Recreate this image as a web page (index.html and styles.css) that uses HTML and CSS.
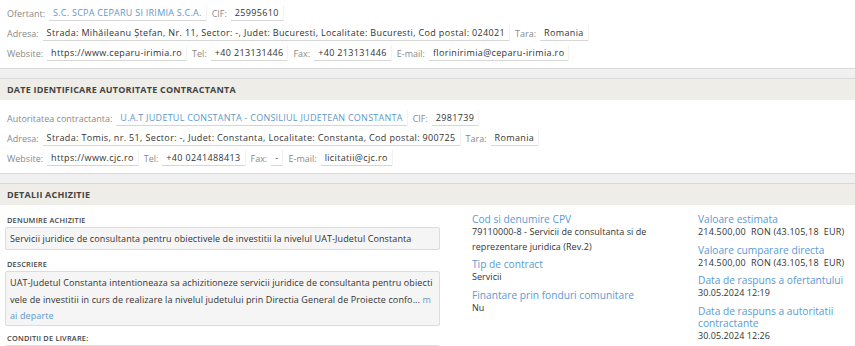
FILE: index.html
```html
<!DOCTYPE html>
<html lang="ro">
<head>
    <meta charset="UTF-8">
    <meta name="viewport" content="width=device-width, initial-scale=1.0">
    <title>Detalii achizitie</title>
    <link rel="stylesheet" href="styles.css">
</head>
<body>
    <!-- Ofertant -->
    <div class="panel first">
        <div class="panel-body">
            <div class="info-row">
                <span class="lbl">Ofertant:</span>
                <span class="val link">S.C. SCPA CEPARU SI IRIMIA S.C.A.</span>
                <span class="lbl">CIF:</span>
                <span class="val">25995610</span>
            </div>
            <div class="info-row">
                <span class="lbl">Adresa:</span>
                <span class="val">Strada: Mihăileanu Ştefan, Nr. 11, Sector: -, Judet: Bucuresti, Localitate: Bucuresti, Cod postal: 024021</span>
                <span class="lbl">Tara:</span>
                <span class="val">Romania</span>
            </div>
            <div class="info-row">
                <span class="lbl">Website:</span>
                <span class="val">https://www.ceparu-irimia.ro</span>
                <span class="lbl">Tel:</span>
                <span class="val">+40 213131446</span>
                <span class="lbl">Fax:</span>
                <span class="val">+40 213131446</span>
                <span class="lbl">E-mail:</span>
                <span class="val">florinirimia@ceparu-irimia.ro</span>
            </div>
        </div>
    </div>

    <!-- Autoritate contractanta -->
    <div class="panel">
        <div class="panel-heading">DATE IDENTIFICARE AUTORITATE CONTRACTANTA</div>
        <div class="panel-body">
            <div class="info-row">
                <span class="lbl">Autoritatea contractanta:</span>
                <span class="val link">U.A.T JUDETUL CONSTANTA - CONSILIUL JUDETEAN CONSTANTA</span>
                <span class="lbl">CIF:</span>
                <span class="val">2981739</span>
            </div>
            <div class="info-row">
                <span class="lbl">Adresa:</span>
                <span class="val">Strada: Tomis, nr. 51, Sector: -, Judet: Constanta, Localitate: Constanta, Cod postal: 900725</span>
                <span class="lbl">Tara:</span>
                <span class="val">Romania</span>
            </div>
            <div class="info-row">
                <span class="lbl">Website:</span>
                <span class="val">https://www.cjc.ro</span>
                <span class="lbl">Tel:</span>
                <span class="val">+40 0241488413</span>
                <span class="lbl">Fax:</span>
                <span class="val">-</span>
                <span class="lbl">E-mail:</span>
                <span class="val">licitatii@cjc.ro</span>
            </div>
        </div>
    </div>

    <!-- Detalii achizitie -->
    <div class="panel">
        <div class="panel-heading">DETALII ACHIZITIE</div>
        <div class="panel-body details">
            <div class="col-main">
                <div class="field-label">DENUMIRE ACHIZITIE</div>
                <div class="field-box">Servicii juridice de consultanta pentru obiectivele de investitii la nivelul UAT-Judetul Constanta</div>

                <div class="field-label">DESCRIERE</div>
                <div class="field-box long">UAT-Judetul Constanta intentioneaza sa achizitioneze servicii juridice de consultanta pentru obiectivele de investitii in curs de realizare la nivelul judetului prin Directia General de Proiecte confo... <a href="#" class="more">mai departe</a></div>

                <div class="field-label">CONDITII DE LIVRARE:</div>
                <div class="field-box"></div>
            </div>

            <div class="col-side">
                <div class="item">
                    <div class="item-title">Cod si denumire CPV</div>
                    <div class="item-val">79110000-8 - Servicii de consultanta si de reprezentare juridica (Rev.2)</div>
                </div>
                <div class="item">
                    <div class="item-title">Tip de contract</div>
                    <div class="item-val">Servicii</div>
                </div>
                <div class="item">
                    <div class="item-title">Finantare prin fonduri comunitare</div>
                    <div class="item-val">Nu</div>
                </div>
            </div>

            <div class="col-side">
                <div class="item">
                    <div class="item-title">Valoare estimata</div>
                    <div class="item-val money">214.500,00  RON (43.105,18  EUR)</div>
                </div>
                <div class="item">
                    <div class="item-title">Valoare cumparare directa</div>
                    <div class="item-val money">214.500,00  RON (43.105,18  EUR)</div>
                </div>
                <div class="item">
                    <div class="item-title">Data de raspuns a ofertantului</div>
                    <div class="item-val">30.05.2024 12:19</div>
                </div>
                <div class="item">
                    <div class="item-title">Data de raspuns a autoritatii contractante</div>
                    <div class="item-val">30.05.2024 12:26</div>
                </div>
            </div>
        </div>
    </div>
</body>
</html>
```

FILE: styles.css
```css
body {
    margin: 0;
    background-color: #f0f0f0;
    font-family: "Open Sans", "Liberation Sans", Arial, sans-serif;
    color: #333;
}

/* Panels */
.panel {
    background-color: #fff;
    border-top: 1px solid #d9d9d9;
    border-bottom: 1px solid #d9d9d9;
    margin-bottom: 9px;
}

.panel.first {
    border-top: none;
}

.panel-heading {
    background-color: #eeede8;
    color: #444;
    font-size: 9px;
    letter-spacing: 0.2px;
    font-weight: bold;
    height: 21px;
    line-height: 22px;
    padding-left: 7px;
}

.panel-body {
    padding: 3px 7px 5px;
}

.panel-heading + .panel-body {
    padding-top: 8px;
}

/* Rows of label / value pairs */
.info-row {
    display: flex;
    align-items: center;
    height: 20px;
    font-size: 9px;
    white-space: nowrap;
}

.lbl {
    color: #8a8a8a;
    margin-right: 4px;
}

.val {
    color: #333;
    letter-spacing: 0.35px;
    padding: 1px 4px 1px;
    border-bottom: 1px solid #d6d6d6;
    box-shadow: 1px 0 0 #f2f2f2;
    margin-right: 6px;
}

.val.link {
    color: #5f98c8;
    letter-spacing: 0.25px;
}

/* Details */
.details {
    display: grid;
    grid-template-columns: 467px 226px 1fr;
    padding: 5px 5px 0 5px;
}

.col-main {
    padding-top: 2px;
    padding-right: 32px;
}

.col-side {
    padding-right: 16px;
}

.col-side:last-child {
    padding-right: 0;
}

.field-label {
    font-size: 7.4px;
    letter-spacing: 0.2px;
    font-weight: 600;
    color: #444;
    padding-left: 2px;
    line-height: 10px;
    margin-bottom: 2px;
}

.field-box {
    background-color: #f5f5f5;
    border: 1px solid #dcdcdc;
    border-radius: 2px;
    font-size: 9px;
    letter-spacing: 0.1px;
    line-height: 17px;
    padding: 2px 4px;
    min-height: 17px;
    margin-bottom: 9px;
    word-break: break-all;
}

.field-box.long {
    line-height: 16.5px;
    padding: 3px 4px 0;
    margin-bottom: 7px;
}

.more {
    color: #5f98c8;
    text-decoration: none;
}

.item {
    margin-bottom: 4px;
}

.item-title {
    color: #5a9ad2;
    font-size: 10.2px;
    line-height: 12px;
}

.item-val {
    font-size: 9px;
    letter-spacing: 0.05px;
    line-height: 14.5px;
}

.item-val.money {
    white-space: pre;
    letter-spacing: 0.2px;
}
```
